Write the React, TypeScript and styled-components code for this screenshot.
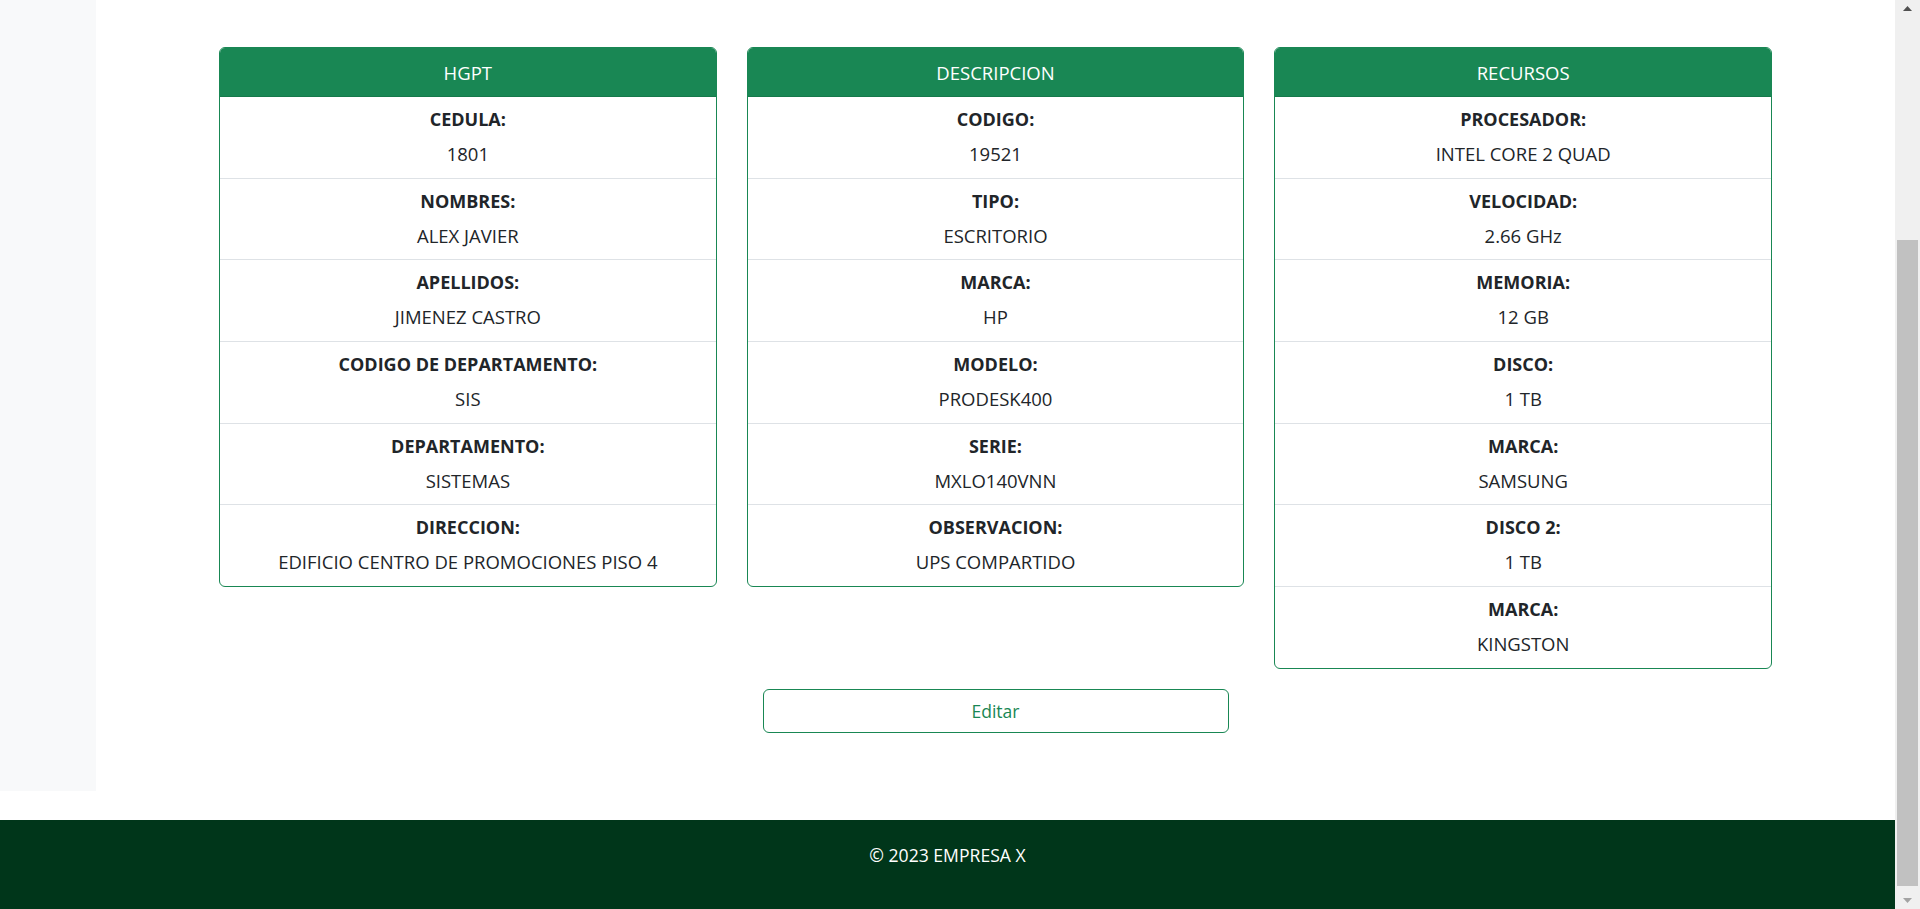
import React from "react";
import styled, { createGlobalStyle } from "styled-components";

const GlobalStyle = createGlobalStyle`
  html, body {
    margin: 0;
    padding: 0;
    height: 909px;
    overflow: hidden;
    background: #ffffff;
  }
  body {
    font-family: "Open Sans", "Noto Sans", sans-serif;
    color: #212529;
  }
  * { box-sizing: border-box; }
`;

const Shell = styled.div`
  display: flex;
  height: 909px;
  width: 1920px;
  overflow: hidden;
`;

const Page = styled.div`
  flex: 1;
  display: flex;
  flex-direction: column;
`;

const MainRow = styled.div`
  display: flex;
  height: 791px;
`;

const Sidebar = styled.aside`
  width: 96px;
  background: #f8f9fa;
`;

const Content = styled.main`
  flex: 1;
  display: flex;
  flex-direction: column;
  align-items: center;
  padding-top: 47px;
`;

const CardGrid = styled.div`
  display: grid;
  grid-template-columns: repeat(3, 1fr);
  gap: 30px;
  width: 1553px;
  align-items: start;
`;

const Card = styled.section`
  border: 1px solid #198754;
  border-radius: 6px;
  overflow: hidden;
  background: #fff;
`;

const CardHeader = styled.header`
  height: 49px;
  background: #198754;
  border-bottom: 1px solid #16794b;
  color: #ffffff;
  display: flex;
  align-items: center;
  justify-content: center;
  font-size: 18.5px;
`;

const Row = styled.div`
  display: flex;
  flex-direction: column;
  align-items: center;
  padding: 10px 16px 11.7px;
  gap: 11px;
  border-bottom: 1px solid #dee2e6;
  &:last-child {
    border-bottom: none;
  }
`;

const Label = styled.div`
  font-weight: 700;
  font-size: 18px;
  line-height: 24px;
  color: #212529;
`;

const Value = styled.div`
  font-size: 18.5px;
  line-height: 24px;
  color: #212529;
`;

const EditButton = styled.button`
  margin-top: 20px;
  width: 466px;
  height: 44px;
  border: 1px solid #198754;
  border-radius: 6px;
  background: #fff;
  color: #198754;
  font-family: inherit;
  font-size: 17.5px;
  cursor: pointer;
`;

const Gap = styled.div`
  height: 29px;
`;

const Footer = styled.footer`
  height: 89px;
  background: #00361a;
  color: #ffffff;
  display: flex;
  justify-content: center;
  padding-top: 23px;
  font-size: 17.6px;
  line-height: 24px;
`;

const Scrollbar = styled.div`
  width: 25px;
  background: #f0f0f0;
  display: flex;
  flex-direction: column;
  align-items: center;
`;

const Arrow = styled.div`
  height: 17px;
  width: 100%;
  display: flex;
  align-items: center;
  justify-content: center;
`;

const Track = styled.div`
  flex: 1;
  width: 100%;
  display: flex;
  flex-direction: column;
  justify-content: flex-end;
  align-items: center;
  padding-bottom: 6px;
`;

const Thumb = styled.div`
  width: 21px;
  height: 646px;
  background: #c1c1c1;
`;

type Item = { label: string; value: string };

const cards: { title: string; items: Item[] }[] = [
  {
    title: "HGPT",
    items: [
      { label: "CEDULA:", value: "1801" },
      { label: "NOMBRES:", value: "ALEX JAVIER" },
      { label: "APELLIDOS:", value: "JIMENEZ CASTRO" },
      { label: "CODIGO DE DEPARTAMENTO:", value: "SIS" },
      { label: "DEPARTAMENTO:", value: "SISTEMAS" },
      { label: "DIRECCION:", value: "EDIFICIO CENTRO DE PROMOCIONES PISO 4" },
    ],
  },
  {
    title: "DESCRIPCION",
    items: [
      { label: "CODIGO:", value: "19521" },
      { label: "TIPO:", value: "ESCRITORIO" },
      { label: "MARCA:", value: "HP" },
      { label: "MODELO:", value: "PRODESK400" },
      { label: "SERIE:", value: "MXLO140VNN" },
      { label: "OBSERVACION:", value: "UPS COMPARTIDO" },
    ],
  },
  {
    title: "RECURSOS",
    items: [
      { label: "PROCESADOR:", value: "INTEL CORE 2 QUAD" },
      { label: "VELOCIDAD:", value: "2.66 GHz" },
      { label: "MEMORIA:", value: "12 GB" },
      { label: "DISCO:", value: "1 TB" },
      { label: "MARCA:", value: "SAMSUNG" },
      { label: "DISCO 2:", value: "1 TB" },
      { label: "MARCA:", value: "KINGSTON" },
    ],
  },
];

export default function App() {
  return (
    <>
      <GlobalStyle />
      <Shell>
        <Page>
          <MainRow>
            <Sidebar />
            <Content>
              <CardGrid>
                {cards.map((c) => (
                  <Card key={c.title}>
                    <CardHeader>{c.title}</CardHeader>
                    {c.items.map((it, i) => (
                      <Row key={i}>
                        <Label>{it.label}</Label>
                        <Value>{it.value}</Value>
                      </Row>
                    ))}
                  </Card>
                ))}
              </CardGrid>
              <EditButton>Editar</EditButton>
            </Content>
          </MainRow>
          <Gap />
          <Footer>© 2023 EMPRESA X</Footer>
        </Page>
        <Scrollbar>
          <Arrow>
            <svg width="9" height="5" viewBox="0 0 9 5">
              <path d="M0 5 L4.5 0 L9 5 Z" fill="#505050" />
            </svg>
          </Arrow>
          <Track>
            <Thumb />
          </Track>
          <Arrow>
            <svg width="9" height="5" viewBox="0 0 9 5">
              <path d="M0 0 L4.5 5 L9 0 Z" fill="#a3a3a3" />
            </svg>
          </Arrow>
        </Scrollbar>
      </Shell>
    </>
  );
}
